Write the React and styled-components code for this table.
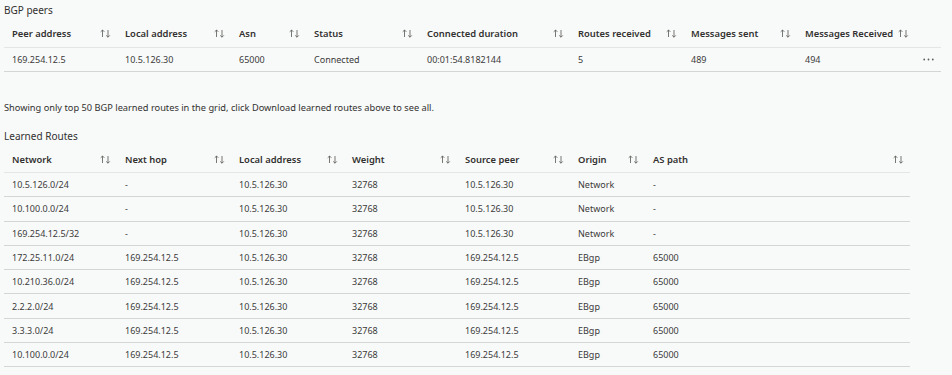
import React from 'react';
import styled, { createGlobalStyle } from 'styled-components';

const GlobalStyle = createGlobalStyle`
  html, body {
    margin: 0;
    padding: 0;
    background: #f8faf9;
  }
  body {
    font-family: "Noto Sans", "Open Sans", sans-serif;
    color: #323130;
  }
`;

const Page = styled.div`
  padding: 0 0 0 4px;
  width: 948px;
  box-sizing: border-box;
`;

const SectionTitle = styled.div`
  font-size: 10px;
  line-height: 14px;
  color: #323130;
  padding-top: ${props => props.top || 0}px;
`;

const Note = styled.div`
  font-size: 9.25px;
  line-height: 14px;
  color: #323130;
  padding-top: 29px;
`;

const Grid = styled.div`
  width: ${props => props.width}px;
  margin-top: ${props => props.top || 0}px;
`;

const Row = styled.div`
  display: grid;
  grid-template-columns: ${props => props.cols};
  align-items: center;
  box-sizing: border-box;
  height: ${props => props.h}px;
  border-bottom: 1px solid ${props => (props.head ? '#e4e6e3' : '#d3d6d4')};
`;

const HeadCell = styled.div`
  display: flex;
  align-items: center;
  justify-content: space-between;
  padding: 0 6px 0 8px;
  font-size: 9.4px;
  font-weight: 600;
  color: #323130;
  white-space: nowrap;
  overflow: hidden;
`;

const Cell = styled.div`
  padding: 0 8px;
  font-size: 9px;
  color: #3b3a39;
  white-space: nowrap;
  overflow: hidden;
`;

const MoreCell = styled.div`
  display: flex;
  justify-content: flex-end;
  padding-right: 7px;
  color: #605e5c;
`;

const SortIcon = () => (
  <svg width="11" height="9" viewBox="0 0 11 9" fill="none" stroke="#605e5c" strokeWidth="0.85">
    <path d="M2.5 8V1M0.7 2.8L2.5 1L4.3 2.8" />
    <path d="M8 1V8.2M6.2 6.4L8 8.2L9.8 6.4" />
  </svg>
);

const MoreIcon = () => (
  <svg width="11" height="3" viewBox="0 0 11 3" fill="#605e5c">
    <circle cx="1.2" cy="1.5" r="0.9" />
    <circle cx="5.5" cy="1.5" r="0.9" />
    <circle cx="9.8" cy="1.5" r="0.9" />
  </svg>
);

const peerCols = '113px 114px 75px 113px 151px 113px 114px 118px 26px';
const peerHead = ['Peer address', 'Local address', 'Asn', 'Status', 'Connected duration', 'Routes received', 'Messages sent', 'Messages Received'];
const peers = [
  ['169.254.12.5', '10.5.126.30', '65000', 'Connected', '00:01:54.8182144', '5', '489', '494'],
];

const routeCols = '113px 114px 113px 113px 113px 75px 265px';
const routeHead = ['Network', 'Next hop', 'Local address', 'Weight', 'Source peer', 'Origin', 'AS path'];
const routes = [
  ['10.5.126.0/24', '-', '10.5.126.30', '32768', '10.5.126.30', 'Network', '-'],
  ['10.100.0.0/24', '-', '10.5.126.30', '32768', '10.5.126.30', 'Network', '-'],
  ['169.254.12.5/32', '-', '10.5.126.30', '32768', '10.5.126.30', 'Network', '-'],
  ['172.25.11.0/24', '169.254.12.5', '10.5.126.30', '32768', '169.254.12.5', 'EBgp', '65000'],
  ['10.210.36.0/24', '169.254.12.5', '10.5.126.30', '32768', '169.254.12.5', 'EBgp', '65000'],
  ['2.2.2.0/24', '169.254.12.5', '10.5.126.30', '32768', '169.254.12.5', 'EBgp', '65000'],
  ['3.3.3.0/24', '169.254.12.5', '10.5.126.30', '32768', '169.254.12.5', 'EBgp', '65000'],
  ['10.100.0.0/24', '169.254.12.5', '10.5.126.30', '32768', '169.254.12.5', 'EBgp', '65000'],
];

export default function App() {
  return (
    <React.Fragment>
      <GlobalStyle />
      <Page>
        <SectionTitle top={3}>BGP peers</SectionTitle>
        <Grid width={937} top={3}>
          <Row cols={peerCols} h={28} head>
            {peerHead.map((item, index) => (
              <HeadCell key={index}>{item}<SortIcon /></HeadCell>
            ))}
            <div />
          </Row>
          {peers.map((row, i) => (
            <Row cols={peerCols} h={24} key={i}>
              {row.map((v, j) => <Cell key={j}>{v}</Cell>)}
              <MoreCell><MoreIcon /></MoreCell>
            </Row>
          ))}
        </Grid>

        <Note>Showing only top 50 BGP learned routes in the grid, click Download learned routes above to see all.</Note>

        <SectionTitle top={14}>Learned Routes</SectionTitle>
        <Grid width={906} top={4}>
          <Row cols={routeCols} h={26} head>
            {routeHead.map((item, index) => (
              <HeadCell key={index}>{item}<SortIcon /></HeadCell>
            ))}
          </Row>
          {routes.map((row, i) => (
            <Row cols={routeCols} h={24.3} key={i}>
              {row.map((v, j) => <Cell key={j}>{v}</Cell>)}
            </Row>
          ))}
        </Grid>
      </Page>
    </React.Fragment>
  );
}
